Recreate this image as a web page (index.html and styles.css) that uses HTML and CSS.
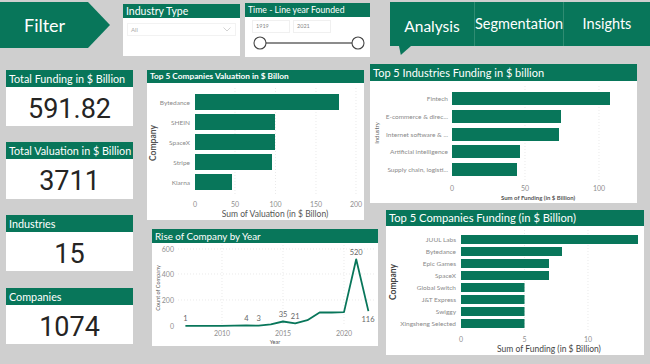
FILE: index.html
```html
<!DOCTYPE html>
<html lang="en">
<head>
<meta charset="utf-8">
<title>Unicorn Dashboard</title>
<link rel="stylesheet" href="styles.css">
</head>
<body>
<div class="page">
  <header class="topbar">
    <div class="filter-banner">Filter</div>
    <div class="slicer slicer-industry">
      <div class="slicer-head">Industry Type</div>
      <div class="dropdown">
        <span>All</span>
        <svg class="chevron" width="8" height="5" viewBox="0 0 8 5"><path d="M0.5 0.5 L4 4 L7.5 0.5" fill="none" stroke="#c8c8c8" stroke-width="0.8"/></svg>
      </div>
    </div>
    <div class="slicer slicer-time">
      <div class="slicer-head head-small">Time - Line year Founded</div>
      <div class="range-inputs">
        <span class="range-box">1919</span>
        <span class="range-box">2021</span>
      </div>
      <svg class="range-slider" width="125" height="20" viewBox="0 0 125 20">
        <line x1="15" y1="10" x2="113" y2="10" stroke="#666" stroke-width="1.6"/>
        <circle cx="15" cy="10" r="6" fill="#fff" stroke="#444" stroke-width="1.1"/>
        <circle cx="113" cy="10" r="6" fill="#fff" stroke="#444" stroke-width="1.1"/>
      </svg>
    </div>
    <nav class="tabs">
      <div class="tab tab-active">Analysis</div>
      <div class="tab">Segmentation</div>
      <div class="tab">Insights</div>
    </nav>
  </header>

  <main class="content">
    <section class="kpis">
      <div class="kpi">
        <div class="kpi-head">Total Funding in $ Billion</div>
        <div class="kpi-value">591.82</div>
      </div>
      <div class="kpi kpi-2">
        <div class="kpi-head">Total Valuation in $ Billion</div>
        <div class="kpi-value">3711</div>
      </div>
      <div class="kpi kpi-3">
        <div class="kpi-head">Industries</div>
        <div class="kpi-value">15</div>
      </div>
      <div class="kpi kpi-4">
        <div class="kpi-head">Companies</div>
        <div class="kpi-value">1074</div>
      </div>
    </section>

    <section class="col-mid">
      <div class="chart chart-valuation">
        <div class="chart-head head-valuation">Top 5 Companies Valuation in $ Billon</div>
        <svg class="chart-svg" width="217" height="137" viewBox="0 0 217 137">
          <g class="grid">
            <line x1="88" y1="5" x2="88" y2="112"/>
            <line x1="128.5" y1="5" x2="128.5" y2="112"/>
            <line x1="169" y1="5" x2="169" y2="112"/>
            <line x1="209" y1="5" x2="209" y2="112"/>
          </g>
          <g class="bars">
            <rect x="48" y="11" width="144" height="16"/>
            <rect x="48" y="31" width="80" height="16"/>
            <rect x="48" y="51" width="80" height="16"/>
            <rect x="48" y="71" width="77" height="16"/>
            <rect x="48" y="91" width="37" height="16"/>
          </g>
          <g class="cat" text-anchor="end">
            <text x="43" y="21.5">Bytedance</text>
            <text x="43" y="41.5">SHEIN</text>
            <text x="43" y="61.5">SpaceX</text>
            <text x="43" y="81.5">Stripe</text>
            <text x="43" y="101.5">Klarna</text>
          </g>
          <g class="tick" text-anchor="middle">
            <text x="48" y="124">0</text>
            <text x="88" y="124">50</text>
            <text x="128.5" y="124">100</text>
            <text x="169" y="124">150</text>
            <text x="209" y="124">200</text>
          </g>
          <text class="axis-title" x="128" y="134" text-anchor="middle">Sum of Valuation (in $ Billon)</text>
          <text class="axis-title axis-bold" transform="translate(9,60) rotate(-90)" text-anchor="middle">Company</text>
        </svg>
      </div>

      <div class="chart chart-rise">
        <div class="chart-head head-rise">Rise of Company by Year</div>
        <svg class="chart-svg" width="226" height="103" viewBox="0 0 226 103">
          <g class="grid">
            <line x1="26" y1="6" x2="222" y2="6"/>
            <line x1="26" y1="31" x2="222" y2="31"/>
            <line x1="26" y1="57" x2="222" y2="57"/>
            <line x1="70" y1="2" x2="70" y2="83"/>
            <line x1="131" y1="2" x2="131" y2="83"/>
            <line x1="192" y1="2" x2="192" y2="83"/>
          </g>
          <g class="tick" text-anchor="end">
            <text x="22" y="8.5">600</text>
            <text x="22" y="33.5">400</text>
            <text x="22" y="59.5">200</text>
            <text x="22" y="85.5">0</text>
          </g>
          <g class="tick" text-anchor="middle">
            <text x="70" y="93">2010</text>
            <text x="131" y="93">2015</text>
            <text x="192" y="93">2020</text>
          </g>
          <text class="axis-tiny" x="123" y="101" text-anchor="middle">Year</text>
          <text class="axis-tiny" transform="translate(8,45) rotate(-90)" text-anchor="middle">Count of Company</text>
          <polyline class="line" points="33.4,82.9 45.6,82.9 57.8,82.8 70,82.8 82.2,82.7 94.4,82.5 106.6,82.6 118.8,81.3 131,78.5 143.2,80.3 155.4,77.2 167.6,69.5 179.8,69.5 192,69.1 204.2,16.3 216.4,68.1"/>
          <g class="dlabel" text-anchor="middle">
            <text x="33.4" y="78">1</text>
            <text x="94.4" y="78">4</text>
            <text x="106.6" y="78">3</text>
            <text x="131" y="74">35</text>
            <text x="143.2" y="76">21</text>
            <text x="204.2" y="12">520</text>
            <text x="216" y="78.5">116</text>
          </g>
        </svg>
      </div>
    </section>

    <section class="col-right">
      <div class="chart chart-industries">
        <div class="chart-head head-big">Top 5 Industries Funding in $ billion</div>
        <svg class="chart-svg" width="267" height="122" viewBox="0 0 267 122">
          <g class="grid">
            <line x1="155" y1="5" x2="155" y2="101"/>
            <line x1="229" y1="5" x2="229" y2="101"/>
          </g>
          <g class="bars">
            <rect x="82" y="11" width="158" height="13"/>
            <rect x="82" y="29" width="109" height="13"/>
            <rect x="82" y="47" width="107" height="13"/>
            <rect x="82" y="64" width="68" height="13"/>
            <rect x="82" y="82" width="65" height="13"/>
          </g>
          <g class="cat" text-anchor="end">
            <text x="78" y="19.8">Fintech</text>
            <text x="78" y="37.8">E-commerce &amp; direc...</text>
            <text x="78" y="55.8">Internet software &amp; ...</text>
            <text x="78" y="72.8">Artificial intelligence</text>
            <text x="78" y="90.8">Supply chain, logisti...</text>
          </g>
          <g class="tick" text-anchor="middle">
            <text x="82" y="109.5">0</text>
            <text x="155" y="109.5">50</text>
            <text x="229" y="109.5">100</text>
          </g>
          <text class="axis-small" x="168" y="118.5" text-anchor="middle">Sum of Funding (in $ Billion)</text>
          <text class="axis-small axis-light" transform="translate(9,52) rotate(-90)" text-anchor="middle">Industry</text>
        </svg>
      </div>

      <div class="chart chart-funding">
        <div class="chart-head head-big">Top 5 Companies Funding (in $ Billion)</div>
        <svg class="chart-svg" width="258" height="129" viewBox="0 0 258 129">
          <g class="grid">
            <line x1="138.5" y1="4" x2="138.5" y2="104"/>
            <line x1="202" y1="4" x2="202" y2="104"/>
          </g>
          <g class="bars">
            <rect x="75" y="9" width="177" height="9"/>
            <rect x="75" y="21" width="101" height="9"/>
            <rect x="75" y="33" width="88" height="9"/>
            <rect x="75" y="45" width="88" height="9"/>
            <rect x="75" y="57" width="63.5" height="9"/>
            <rect x="75" y="69" width="63.5" height="9"/>
            <rect x="75" y="81" width="63.5" height="9"/>
            <rect x="75" y="93" width="63.5" height="9"/>
          </g>
          <g class="cat" text-anchor="end">
            <text x="70" y="15.8">JUUL Labs</text>
            <text x="70" y="27.8">Bytedance</text>
            <text x="70" y="39.8">Epic Games</text>
            <text x="70" y="51.8">SpaceX</text>
            <text x="70" y="63.8">Global Switch</text>
            <text x="70" y="75.8">J&amp;T Express</text>
            <text x="70" y="87.8">Swiggy</text>
            <text x="70" y="99.8">Xingsheng Selected</text>
          </g>
          <g class="tick" text-anchor="middle">
            <text x="75" y="115.5">0</text>
            <text x="138.5" y="115.5">5</text>
            <text x="202" y="115.5">10</text>
          </g>
          <text class="axis-title axis-dark" x="163" y="126" text-anchor="middle">Sum of Funding (in $ Billion)</text>
          <text class="axis-title axis-dark axis-bold" transform="translate(10,56) rotate(-90)" text-anchor="middle">Company</text>
        </svg>
      </div>
    </section>
  </main>
</div>
</body>
</html>
```

FILE: styles.css
```css
* { box-sizing: border-box; }

html, body {
  margin: 0;
  padding: 0;
}

body {
  background: #cfcfcf;
  font-family: Lato, "Noto Sans", sans-serif;
  color: #222;
}

.page {
  width: 650px;
  height: 364px;
  overflow: hidden;
  background: #cfcfcf;
}

/* ---------- top bar ---------- */
.topbar {
  display: flex;
  align-items: flex-start;
  height: 64px;
}

.filter-banner {
  width: 110px;
  height: 46px;
  margin-top: 2px;
  background: #08765a;
  color: #fff;
  font-size: 18px;
  line-height: 46px;
  padding-left: 24px;
  clip-path: polygon(0 0, 88px 0, 110px 23px, 88px 46px, 0 46px);
}

.slicer {
  background: #fff;
}

.slicer-industry {
  width: 117px;
  height: 52px;
  margin-top: 4px;
  margin-left: 13px;
}

.slicer-time {
  width: 125px;
  height: 54px;
  margin-top: 3px;
  margin-left: 5px;
}

.slicer-head {
  height: 14px;
  background: #08765a;
  color: #fff;
  font-size: 10.5px;
  line-height: 14px;
  padding-left: 3px;
  white-space: nowrap;
}

.head-small {
  font-size: 8.7px;
}

.dropdown {
  display: flex;
  align-items: center;
  justify-content: space-between;
  margin: 5px 4px 0 4px;
  height: 13px;
  padding: 0 4px 0 3px;
  border: 1px solid #f2f2f2;
  font-size: 6px;
  color: #aaa;
}

.range-inputs {
  display: flex;
  gap: 3px;
  padding: 3px 0 0 7px;
}

.range-box {
  width: 38px;
  height: 13px;
  border: 1px solid #f0f0f0;
  font-size: 5.5px;
  line-height: 11px;
  color: #888;
  padding-left: 3px;
}

.range-slider {
  display: block;
}

.tabs {
  display: flex;
  margin-left: 20px;
  margin-top: 2px;
  height: 44px;
}

.tab {
  position: relative;
  height: 44px;
  background: #08765a;
  color: #fff;
  font-size: 14.5px;
  line-height: 44px;
  text-align: center;
  white-space: nowrap;
}

.tab:nth-child(2) { width: 89px; border-left: 1px solid #2f8c72; }
.tab:nth-child(3) { width: 87px; border-left: 1px solid #2f8c72; }

.tab-active {
  width: 84px;
  font-size: 15.5px;
  line-height: 48px;
}

.tab-active::after {
  content: "";
  position: absolute;
  left: 9px;
  top: 44px;
  width: 12px;
  height: 9px;
  background: #08765a;
  clip-path: polygon(0 0, 100% 0, 15% 100%);
}

/* ---------- main ---------- */
.content {
  display: flex;
  align-items: flex-start;
}

.kpis {
  width: 127px;
  margin-left: 6px;
  padding-top: 6px;
  display: flex;
  flex-direction: column;
}

.kpi {
  background: #fff;
  height: 56px;
  display: flex;
  flex-direction: column;
}

.kpi-2 { margin-top: 16px; height: 57px; }
.kpi-3 { margin-top: 16px; }
.kpi-4 { margin-top: 17px; }

.kpi-head {
  height: 17px;
  background: #08765a;
  color: #fff;
  font-size: 10.8px;
  line-height: 17px;
  padding-left: 3px;
  white-space: nowrap;
}

.kpi-value {
  flex: 1;
  display: flex;
  align-items: center;
  justify-content: center;
  font-family: Roboto, "DejaVu Sans", sans-serif;
  font-size: 27px;
  color: #252423;
  padding-top: 4px;
}

.col-mid {
  width: 223px;
  margin-left: 14px;
  padding-top: 6px;
  display: flex;
  flex-direction: column;
}

.col-right {
  width: 280px;
  display: flex;
  flex-direction: column;
}

.chart {
  background: #fff;
  display: flex;
  flex-direction: column;
  flex-shrink: 0;
}

.chart-valuation { width: 217px; height: 150px; }
.chart-rise { width: 226px; height: 117px; margin-top: 9px; margin-left: 5px; }
.chart-industries { width: 267px; height: 139px; }
.chart-funding { width: 258px; height: 145px; margin-top: 7px; margin-left: 16px; }

.chart-head {
  background: #08765a;
  color: #fff;
  white-space: nowrap;
  padding-left: 3px;
}

.head-valuation {
  height: 13px;
  font-size: 8.3px;
  font-weight: 700;
  line-height: 13px;
}

.chart-industries .chart-head {
  height: 17px;
  font-size: 11px;
  line-height: 17px;
}

.chart-funding .chart-head {
  height: 16px;
  font-size: 11.2px;
  line-height: 16px;
}

.head-rise {
  height: 14px;
  font-size: 9.8px;
  line-height: 14px;
}

.chart-svg {
  display: block;
  font-family: Lato, "Noto Sans", sans-serif;
}

.grid line {
  stroke: #dcdcdc;
  stroke-width: 0.6;
  stroke-dasharray: 1 2;
}

.bars rect { fill: #08765a; }

.cat text {
  font-size: 6.5px;
  fill: #8a8a8a;
}

.tick text {
  font-size: 7px;
  fill: #8f8f8f;
}

.axis-title {
  font-size: 8.5px;
  fill: #555;
}

.axis-dark { fill: #444; }
.axis-bold { font-weight: 700; }

.axis-small {
  font-size: 6px;
  font-weight: 700;
  fill: #555;
}

.axis-light { font-weight: 400; fill: #666; }

.axis-tiny {
  font-size: 5.5px;
  fill: #555;
}

.line {
  fill: none;
  stroke: #08765a;
  stroke-width: 1.8;
  stroke-linejoin: round;
}

.dlabel text {
  font-size: 7.5px;
  fill: #666;
}
```
